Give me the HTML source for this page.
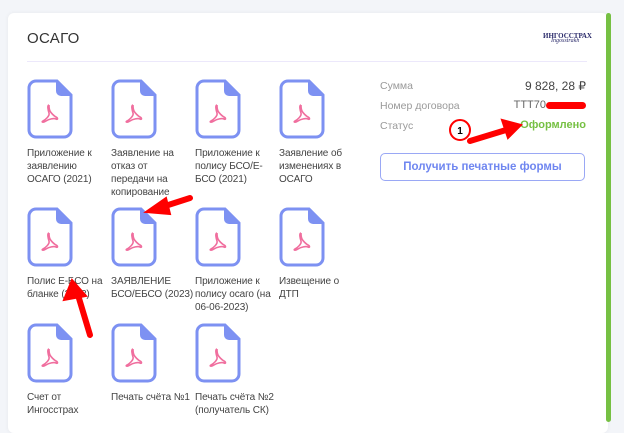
<!DOCTYPE html><html><head><meta charset="utf-8"><style>
body{margin:0;width:624px;height:422px;background:#f3f5f9;font-family:"Liberation Sans",sans-serif;overflow:hidden;position:relative}
.card{position:absolute;left:8px;top:13px;width:600px;height:420px;background:#fff;border-radius:6px;box-shadow:0 0 4px rgba(0,0,0,.06)}
.green{position:absolute;left:606px;top:13px;width:5px;height:409px;background:#76c043;border-radius:3px}
h1{position:absolute;left:27px;top:30px;margin:0;font-size:15px;font-weight:normal;color:#333;letter-spacing:.3px}
.line{position:absolute;left:27px;top:61px;width:560px;height:1px;background:#ece8fb}
.doc{position:absolute;width:82px;font-size:10px;line-height:13px;color:#444;letter-spacing:-0.1px}
.doc svg{display:block;margin-bottom:8px}
.lbl{position:absolute;left:380px;font-size:10.5px;color:#999}
.val{position:absolute;right:38px;font-size:11px;color:#444;text-align:right}
.btn{position:absolute;left:380px;top:153px;width:205px;height:28px;border:1.5px solid #9aa8f5;border-radius:5px;color:#6f86f0;font-size:11.5px;font-weight:bold;text-align:center;line-height:26px;box-sizing:border-box}
</style></head><body>
<div class="card"></div><div class="green"></div>
<h1>ОСАГО</h1>
<div style="position:absolute;left:543px;top:32px;font-family:'Liberation Serif',serif;font-size:7px;color:#2a2a6a;font-weight:bold">ИНГОССТРАХ<div style="font-style:italic;font-weight:normal;font-size:6px;margin-left:8px;margin-top:-2px">Ingosstrakh</div></div>
<div class="line"></div>
<svg width="0" height="0" style="position:absolute"><defs><g id="ic"><path d="M2 9a7 7 0 0 1 7-7H30L44 16V51a7 7 0 0 1-7 7H9a7 7 0 0 1-7-7Z" fill="#fff" stroke="#7d91f2" stroke-width="3"/><path d="M29 1V12a5 5 0 0 0 5 5H45Z" fill="#7d91f2"/><path d="M22 26c-2 0-1 5 0 8s-4 7-6 8 0 2 3 0 8-3 10-2 2-1 0-2-5-4-6-6-1-6-1-6" fill="none" stroke="#f06e9e" stroke-width="1.6"/></g></defs></svg>
<div class="doc" style="left:27px;top:79px"><svg width="46" height="60"><use href="#ic"/></svg>Приложение к заявлению ОСАГО (2021)</div>
<div class="doc" style="left:111px;top:79px"><svg width="46" height="60"><use href="#ic"/></svg>Заявление на отказ от передачи на копирование</div>
<div class="doc" style="left:195px;top:79px"><svg width="46" height="60"><use href="#ic"/></svg>Приложение к полису БСО/Е-БСО (2021)</div>
<div class="doc" style="left:279px;top:79px"><svg width="46" height="60"><use href="#ic"/></svg>Заявление об изменениях в ОСАГО</div>
<div class="doc" style="left:27px;top:207px"><svg width="46" height="60"><use href="#ic"/></svg>Полис Е-БСО на бланке (2023)</div>
<div class="doc" style="left:111px;top:207px"><svg width="46" height="60"><use href="#ic"/></svg>ЗАЯВЛЕНИЕ<br><span style="white-space:nowrap">БСО/ЕБСО (2023)</span></div>
<div class="doc" style="left:195px;top:207px"><svg width="46" height="60"><use href="#ic"/></svg>Приложение к полису осаго (на 06-06-2023)</div>
<div class="doc" style="left:279px;top:207px"><svg width="46" height="60"><use href="#ic"/></svg>Извещение о ДТП</div>
<div class="doc" style="left:27px;top:323px"><svg width="46" height="60"><use href="#ic"/></svg>Счет от<br>Ингосстрах</div>
<div class="doc" style="left:111px;top:323px"><svg width="46" height="60"><use href="#ic"/></svg><span style="white-space:nowrap">Печать счёта №1</span></div>
<div class="doc" style="left:195px;top:323px"><svg width="46" height="60"><use href="#ic"/></svg><span style="white-space:nowrap">Печать счёта №2</span><br>(получатель СК)</div>
<div class="lbl" style="top:80px">Сумма</div><div class="val" style="top:79px;font-size:12px">9 828, 28 ₽</div>
<div class="lbl" style="top:100px">Номер договора</div><div class="val" style="top:99px;color:#666">ТТТ70<span style="display:inline-block;width:40px;height:7px;background:#f00;border-radius:4px;vertical-align:middle"></span></div>
<div class="lbl" style="top:120px">Статус</div><div class="val" style="top:119px;color:#76c043;font-weight:bold">Оформлено</div>
<div class="btn">Получить печатные формы</div>
<svg width="624" height="422" style="position:absolute;left:0;top:0">
<g fill="#f00" stroke="#f00" stroke-linecap="round">
<line x1="90" y1="335" x2="78" y2="295" stroke-width="6"/><polygon points="72,280 64,300 86,296" stroke-width="2"/>
<line x1="190" y1="198" x2="162" y2="207" stroke-width="6"/><polygon points="146,212 166,198 170,214" stroke-width="2"/>
<line x1="470" y1="141" x2="506" y2="130" stroke-width="6"/><polygon points="521,125 502,120 508,138" stroke-width="2"/>
</g>
<circle cx="460" cy="130" r="10" fill="#fff" stroke="#f00" stroke-width="2"/>
<text x="460" y="134" font-size="10" font-weight="bold" text-anchor="middle" font-family="Liberation Sans">1</text>
</svg>
</body></html>
